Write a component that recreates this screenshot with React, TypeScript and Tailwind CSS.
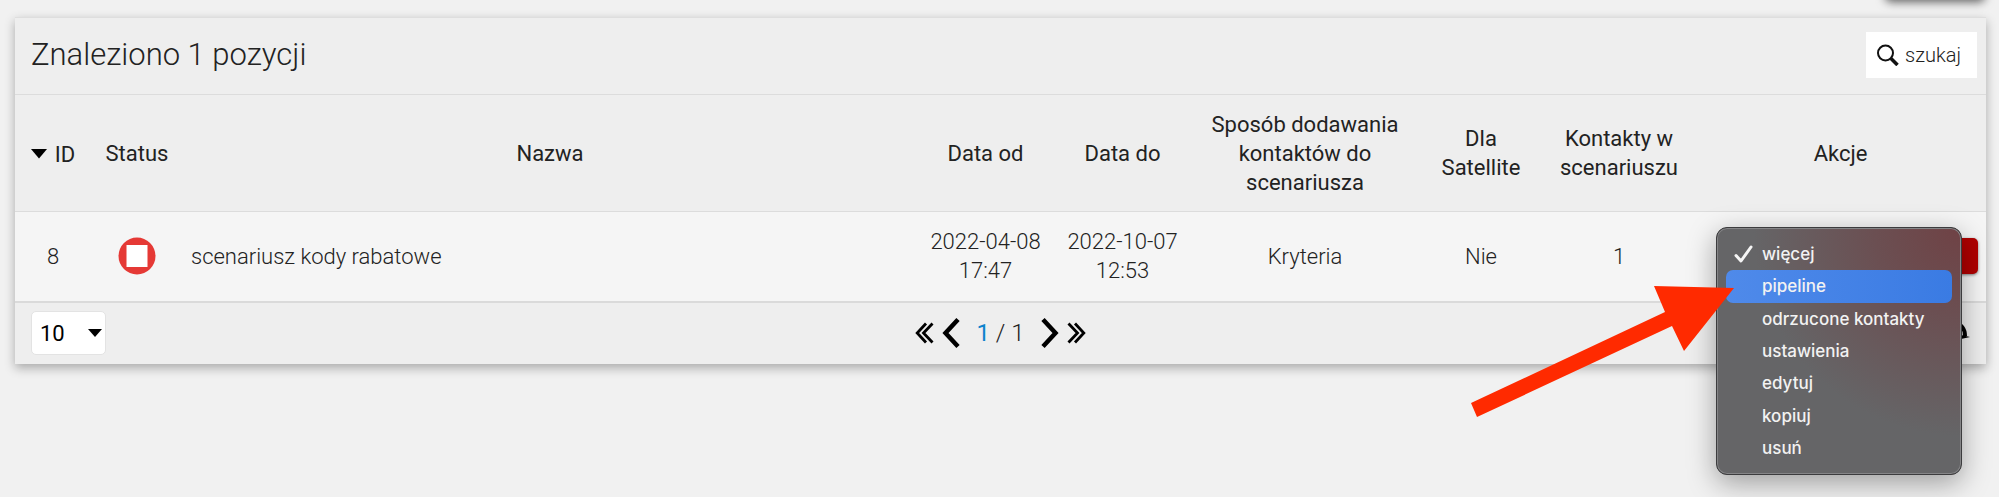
const columns = [
  { id: "status", label: "Status", width: "w-[92px]" },
  { id: "name", label: "Nazwa", width: "" },
  { id: "from", label: "Data od", width: "w-[137px]" },
  { id: "to", label: "Data do", width: "w-[137px]" },
  { id: "mode", label: "Sposób dodawania kontaktów do scenariusza", width: "w-[228px]" },
  { id: "satellite", label: "Dla Satellite", width: "w-[124px]" },
  { id: "contacts", label: "Kontakty w scenariuszu", width: "w-[152px]" },
  { id: "actions", label: "Akcje", width: "w-[291px]" },
];

const actions = ["więcej", "pipeline", "odrzucone kontakty", "ustawienia", "edytuj", "kopiuj", "usuń"];

function StopIcon() {
  return (
    <svg viewBox="0 0 38 38" className="mx-auto size-[38px]" role="img" aria-label="zatrzymany">
      <circle cx="19" cy="19" r="18.5" fill="#e53935" />
      <path d="M8.5 8h21v22h-21z" fill="#fff" />
    </svg>
  );
}

function ActionsMenu() {
  return (
    <div
      role="menu"
      aria-label="więcej"
      className="absolute top-[15px] right-6 z-10 flex h-[248px] w-[246px] flex-col rounded-[11px] border border-[#3c3c3e] bg-[#656567] bg-[radial-gradient(circle_at_top_right,#6f4245_0%,#6b4f52_25%,#656567_60%)] px-[9px] pt-[10px] pb-[9px] shadow-[inset_0_0_0_1px_#858587,0_8px_28px_rgba(0,0,0,0.35)]"
    >
      {actions.map((action, index) => (
        <button
          key={action}
          type="button"
          role="menuitem"
          className={`flex flex-1 items-center rounded-[7px] pl-2 text-left font-[Inter,sans-serif] text-[17px] font-medium text-[#f2f2f2] ${index === 1 ? "bg-linear-to-r from-[#4f8aea] to-[#3a7be3]" : ""}`}
        >
          <span className="flex w-7 shrink-0">
            {index === 0 && (
              <svg viewBox="0 0 19 18" className="h-[18px] w-[19px]" fill="none" stroke="#f5f5f5" strokeWidth="3" strokeLinecap="round" strokeLinejoin="round" aria-hidden="true">
                <path d="M2 10.5 7 16 17 2" />
              </svg>
            )}
          </span>
          {action}
        </button>
      ))}
    </div>
  );
}

function Pagination() {
  return (
    <nav className="flex items-center" aria-label="Strony">
      <button type="button" aria-label="Pierwsza strona" className="mr-2">
        <svg viewBox="0 0 19 22" className="h-[22px] w-[19px]" fill="none" stroke="#000" strokeWidth="2.8">
          <path d="M11 1.5 2.2 11 11 20.5M17.5 1.5 8.5 11l9 9.5" />
        </svg>
      </button>
      <button type="button" aria-label="Poprzednia strona" className="mr-4">
        <svg viewBox="0 0 18 32" className="h-8 w-[18px]" fill="none" stroke="#000" strokeWidth="4.5">
          <path d="M16 2.5 3.5 16 16 29.5" />
        </svg>
      </button>
      <span className="text-[24px] leading-8 font-light whitespace-nowrap">
        <span className="font-normal text-[#0d83cd]">1</span> / 1
      </span>
      <button type="button" aria-label="Następna strona" className="ml-4">
        <svg viewBox="0 0 18 32" className="h-8 w-[18px]" fill="none" stroke="#000" strokeWidth="4.5">
          <path d="M2 2.5 14.5 16 2 29.5" />
        </svg>
      </button>
      <button type="button" aria-label="Ostatnia strona" className="ml-2">
        <svg viewBox="0 0 19 22" className="h-[22px] w-[19px]" fill="none" stroke="#000" strokeWidth="2.8">
          <path d="M8 1.5 16.8 11 8 20.5M1.5 1.5 10.5 11l-9 9.5" />
        </svg>
      </button>
    </nav>
  );
}

export default function App() {
  return (
    <div className="relative min-h-screen overflow-hidden bg-[#f1f1f1] pt-[17px] pr-[13px] pl-[15px] font-[Roboto,sans-serif] text-[22px] leading-[29px] text-[#222]">
      {/* lower edge of the toolbar button above the list */}
      <div className="absolute -top-10 right-[14px] h-10 w-[100px] rounded-md bg-[#ededed] shadow-[0_2px_10px_rgba(0,0,0,0.6)]" />

      <section className="border-t border-[#dedede] bg-[#eeeeee] shadow-[0_4px_10px_rgba(0,0,0,0.3)]">
        <header className="flex h-[76px] items-center justify-between pr-[9px] pb-0.5 pl-4">
          <h1 className="text-[31px] leading-9 font-light">Znaleziono 1 pozycji</h1>
          <button type="button" className="flex h-[46px] items-center gap-1.5 bg-white pr-4 pl-[11px] text-[20px] font-light">
            <svg viewBox="0 0 22 22" className="size-[22px]" fill="none" stroke="#111" aria-hidden="true">
              <circle cx="8.5" cy="9" r="7.5" strokeWidth="2" />
              <path d="m14 14.5 6.5 6.5" strokeWidth="3.5" />
            </svg>
            szukaj
          </button>
        </header>

        <table className="w-full table-fixed border-collapse text-center">
          <thead>
            <tr className="h-[117px] border-t border-[#dcdcdc]">
              <th className="w-[76px] p-0 font-normal">
                <button type="button" className="inline-flex items-center gap-2">
                  <svg viewBox="0 0 16 10" className="h-[10px] w-4" aria-hidden="true">
                    <path d="M0 0h16L8 9.5z" fill="#000" />
                  </svg>
                  ID
                </button>
              </th>
              {columns.map((column) => (
                <th key={column.id} className={`px-3 py-0 font-normal ${column.width}`}>{column.label}</th>
              ))}
            </tr>
          </thead>
          <tbody>
            <tr className="h-[89px] border-t border-[#dcdcdc] bg-[#f5f5f5] font-light">
              <td>8</td>
              <td><StopIcon /></td>
              <td className="px-2 text-left">scenariusz kody rabatowe</td>
              <td>2022-04-08<br />17:47</td>
              <td>2022-10-07<br />12:53</td>
              <td>Kryteria</td>
              <td>Nie</td>
              <td>1</td>
              <td className="relative">
                <button type="button" aria-label="usuń" className="mr-2 ml-auto block h-9 w-[90px] rounded-[5px] bg-[#b00000] shadow-[0_1px_3px_rgba(0,0,0,0.5)]" />
                <ActionsMenu />
              </td>
            </tr>
          </tbody>
        </table>

        <footer className="grid h-[63px] grid-cols-[1fr_auto_1fr] items-center border-t-2 border-[#dadada] px-4">
          <div className="relative w-[75px]">
            <select aria-label="Liczba pozycji na stronie" className="h-11 w-full appearance-none rounded-[5px] border border-[#e3e3e3] bg-white pl-2 text-[22px] text-black">
              <option>10</option>
            </select>
            <svg viewBox="0 0 14 8" className="pointer-events-none absolute top-[18px] right-1 h-2 w-[14px]" aria-hidden="true">
              <path d="M0 0h14L7 8z" fill="#000" />
            </svg>
          </div>
          <Pagination />
          <button type="button" aria-label="Odśwież" className="justify-self-end">
            <svg viewBox="0 0 24 24" className="size-6" fill="none" stroke="#000" strokeWidth="4">
              <path d="M2 12c1-13 17-12 17 3" />
              <path d="M13 13.5 24 16l-9 2z" fill="#000" stroke="none" />
            </svg>
          </button>
        </footer>
      </section>

      {/* pointer to the highlighted menu entry */}
      <svg viewBox="0 0 264 131" className="pointer-events-none absolute top-[286px] right-[265px] z-20 h-[131px] w-[264px]" aria-hidden="true">
        <path d="M264 2 184 0l11 26L1 117l6 14 195-91 12 25z" fill="#ff2a00" />
      </svg>
    </div>
  );
}
